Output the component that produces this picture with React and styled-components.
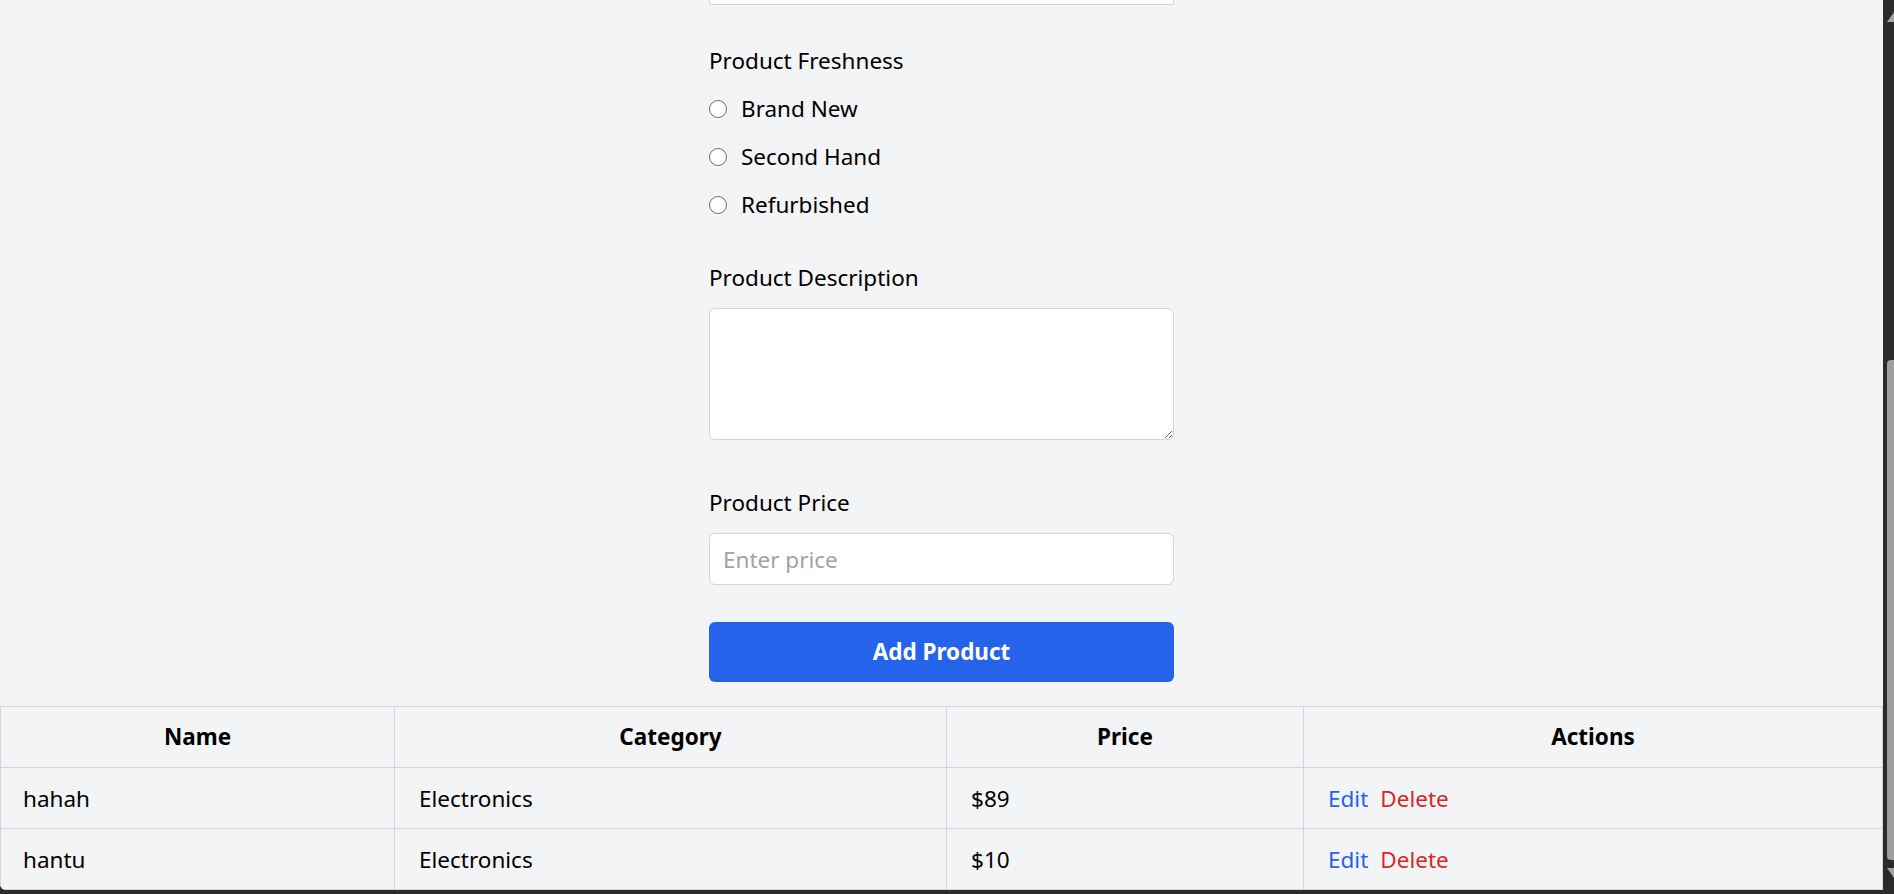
import React from 'react';
import styled, { createGlobalStyle } from 'styled-components';

const GlobalStyle = createGlobalStyle`
  html, body {
    margin: 0;
    padding: 0;
  }
  body {
    background: #2b2b2b;
    font-family: "Noto Sans", "Open Sans", Arial, sans-serif;
    overflow: hidden;
    color: #000;
  }
  * {
    box-sizing: border-box;
  }
`;

const Frame = styled.div`
  display: flex;
  width: 1894px;
  height: 894px;
  background: #2b2b2b;
`;

// the page is scrolled to its end, so the form's top lies above the window
const Viewport = styled.main`
  width: 1883px;
  height: 890px;
  background: #f3f4f6;
  border-bottom-left-radius: 6px;
  overflow: hidden;
  display: flex;
  flex-direction: column;
  justify-content: flex-end;
`;

const ScrollRail = styled.div`
  width: 11px;
  display: flex;
  flex-direction: column;
  align-items: flex-end;
  padding: 12px 0 16px;
`;

const RailSpace = styled.div`
  flex: 1;
`;

const Thumb = styled.div`
  width: 7px;
  height: 500px;
  background: #9f9f9f;
  border-radius: 4px 0 0 4px;
  margin-bottom: 8px;
`;

const Form = styled.form`
  width: 465px;
  margin: 0 auto 24px;
  display: flex;
  flex-direction: column;
  font-size: 22.5px;
  line-height: 36px;
`;

const Field = styled.div`
  display: flex;
  flex-direction: column;
  margin-bottom: ${(p) => p.$mb}px;
`;

const Label = styled.label`
  display: block;
  margin-bottom: 12px;
`;

const Select = styled.select`
  height: 52px;
  border: 1px solid #d1d5db;
  border-radius: 2px;
  background: #fff;
  font: inherit;
  padding: 0 12px;
`;

const RadioList = styled.div`
  display: flex;
  flex-direction: column;
  gap: 12px;
`;

const RadioRow = styled.label`
  display: flex;
  align-items: center;
  gap: 14px;
  height: 36px;
`;

const Radio = styled.input`
  appearance: none;
  width: 18px;
  height: 18px;
  margin: 0;
  border: 1.5px solid #6d6d6d;
  border-radius: 50%;
  background: #fff;
`;

const TextArea = styled.textarea`
  display: block;
  width: 100%;
  height: 132px;
  border: 1px solid #d1d5db;
  border-radius: 6px;
  background: #fff;
  font: inherit;
  padding: 8px 12px;
  resize: vertical;
`;

const Input = styled.input`
  height: 52px;
  border: 1px solid #d1d5db;
  border-radius: 6px;
  background: #fff;
  font: inherit;
  padding: 0 13px;
  &::placeholder {
    color: #9ca3af;
  }
`;

const SubmitButton = styled.button`
  margin-top: 37px;
  height: 60px;
  border: none;
  border-radius: 6px;
  background: #2563eb;
  color: #fff;
  font: inherit;
  font-weight: 700;
`;

const Table = styled.table`
  width: 100%;
  border-collapse: collapse;
  table-layout: fixed;
  font-size: 22.5px;
  line-height: 36px;
`;

const Th = styled.th`
  border: 1px solid #d1d5db;
  padding: 12px 24px;
  font-weight: 700;
  text-align: center;
`;

const Td = styled.td`
  border: 1px solid #d1d5db;
  padding: 13px 24px 11px;
  text-align: left;
  &:first-child {
    padding-left: 22px;
  }
`;

const ActionLink = styled.button`
  border: none;
  background: none;
  padding: 0;
  margin-right: 12px;
  font: inherit;
  color: ${(p) => (p.$danger ? '#dc2626' : '#2563eb')};
  cursor: pointer;
`;

const ArrowUp = () => (
  <svg width="7" height="10" viewBox="0 0 7 10">
    <polygon points="7,0 0,10 7,10" fill="#a3a3a3" />
  </svg>
);

const ArrowDown = () => (
  <svg width="7" height="10" viewBox="0 0 7 10">
    <polygon points="0,0 7,0 7,10" fill="#a3a3a3" />
  </svg>
);

const products = [
  { name: 'hahah', category: 'Electronics', price: 89 },
  { name: 'hantu', category: 'Electronics', price: 10 },
];

const App = () => (
  <>
    <GlobalStyle />
    <Frame>
      <Viewport>
        <Form onSubmit={(e) => e.preventDefault()}>
          <Field $mb={38}>
            <Select aria-label="Product Category" defaultValue="">
              <option value="" aria-label="none" />
            </Select>
          </Field>
          <Field $mb={37}>
            <Label as="div">Product Freshness</Label>
            <RadioList>
              {['Brand New', 'Second Hand', 'Refurbished'].map((f) => (
                <RadioRow key={f}>
                  <Radio type="radio" name="freshness" value={f} />
                  {f}
                </RadioRow>
              ))}
            </RadioList>
          </Field>
          <Field $mb={45}>
            <Label htmlFor="productDescription">Product Description</Label>
            <TextArea id="productDescription" />
          </Field>
          <Field $mb={0}>
            <Label htmlFor="productPrice">Product Price</Label>
            <Input id="productPrice" type="number" placeholder="Enter price" />
          </Field>
          <SubmitButton type="submit">Add Product</SubmitButton>
        </Form>
        <Table>
          <colgroup>
            <col style={{ width: 394 }} />
            <col style={{ width: 552 }} />
            <col style={{ width: 357 }} />
            <col />
          </colgroup>
          <thead>
            <tr>
              <Th>Name</Th>
              <Th>Category</Th>
              <Th>Price</Th>
              <Th>Actions</Th>
            </tr>
          </thead>
          <tbody>
            {products.map((p) => (
              <tr key={p.name}>
                <Td>{p.name}</Td>
                <Td>{p.category}</Td>
                <Td>${p.price}</Td>
                <Td>
                  <ActionLink type="button">Edit</ActionLink>
                  <ActionLink type="button" $danger>Delete</ActionLink>
                </Td>
              </tr>
            ))}
          </tbody>
        </Table>
      </Viewport>
      <ScrollRail>
        <ArrowUp />
        <RailSpace />
        <Thumb />
        <ArrowDown />
      </ScrollRail>
    </Frame>
  </>
);

export default App;
